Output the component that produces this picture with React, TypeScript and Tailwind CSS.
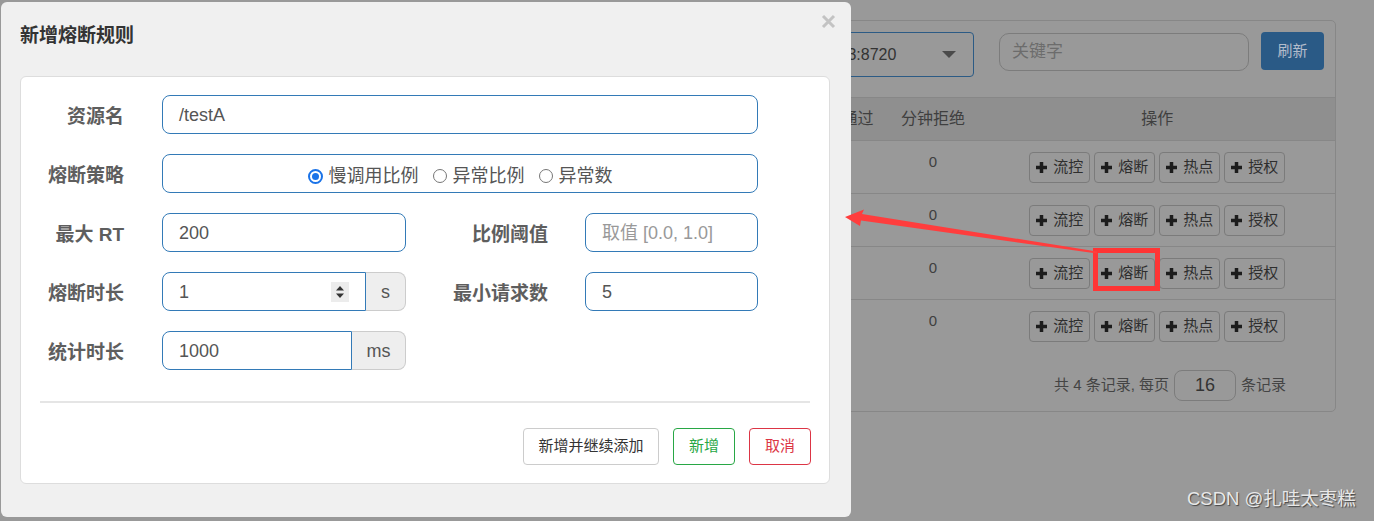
import React from 'react';

const ops = ['流控', '熔断', '热点', '授权'];

function PlusIcon() {
  return (
    <svg width="11" height="11" viewBox="0 0 11 11" className="shrink-0">
      <rect x="3.75" y="0" width="3.5" height="11" fill="#1c1c1c" />
      <rect x="0" y="3.75" width="11" height="3.5" fill="#1c1c1c" />
    </svg>
  );
}

function TableRow() {
  return (
    <div className="flex h-[53px] border-t border-[#878787]">
      <div className="w-[334px]" />
      <div className="w-[77px] pt-[11px] text-center text-[15px] leading-[20px] text-[#3f3f3f]">0</div>
      <div className="ml-[8px] flex w-[356px] justify-center gap-[4px] pt-[11px]">
        {ops.map((op) => (
          <div
            key={op}
            className="flex h-[31px] w-[61px] items-center justify-center gap-[6px] rounded-[4px] border border-[#7b7b7b] text-[15px] text-[#2e2e2e]"
          >
            <PlusIcon />
            <span>{op}</span>
          </div>
        ))}
      </div>
    </div>
  );
}

function Label({ text, width }: { text: string; width: string }) {
  return (
    <div className={`${width} shrink-0 pt-[5px] text-right text-[19px] font-bold text-[#5e5e5e]`}>{text}</div>
  );
}

function Radio({ checked, label }: { checked?: boolean; label: string }) {
  return (
    <div className="flex items-center gap-[6px]">
      {checked ? (
        <span className="flex h-[15px] w-[15px] items-center justify-center rounded-full border-[2px] border-[#1a73e8]">
          <span className="h-[7px] w-[7px] rounded-full bg-[#1a73e8]" />
        </span>
      ) : (
        <span className="h-[14px] w-[14px] rounded-full border border-[#767676] bg-white" />
      )}
      <span className="text-[18px] text-[#555]">{label}</span>
    </div>
  );
}

export default function App() {
  return (
    <div className="relative h-[521px] w-[1374px] overflow-hidden bg-[#999] font-['Liberation_Sans','Noto_Sans_CJK_SC',sans-serif]">
      {/* page behind the dialog */}
      <div className="ml-[560px] mt-[20px] h-[392px] w-[776px] rounded-[5px] border border-[#878787]">
        <div className="flex items-start pt-[11px]">
          <div className="ml-[180px] flex h-[45px] w-[233px] items-center justify-between rounded-[4px] border border-[#2c5b85] pl-[12px] pr-[17px]">
            <span className="text-[16px] text-[#333]">192.168.0.103:8720</span>
            <span className="h-0 w-0 border-x-[7px] border-t-[7px] border-x-transparent border-t-[#4a4a4a]" />
          </div>
          <div className="ml-[25px] mt-[1px] flex h-[38px] w-[250px] items-center rounded-[10px] border border-[#7c7c7c] pl-[12px] text-[17px] text-[#6c6c6c]">
            关键字
          </div>
          <div className="ml-[12px] flex h-[38px] w-[63px] items-center justify-center rounded-[4px] bg-[#2a5a86] text-[15px] text-[#b3bccb]">
            刷新
          </div>
        </div>
        <div className="mt-[20px] flex h-[43px] items-center border-t border-[#878787] bg-[#8f8f8f] text-[16px] text-[#3f3f3f]">
          <div className="w-[334px] pr-[21px] text-right">最近通过</div>
          <div className="w-[77px] text-center">分钟拒绝</div>
          <div className="ml-[8px] w-[356px] text-center">操作</div>
        </div>
        <TableRow />
        <TableRow />
        <TableRow />
        <TableRow />
        <div className="mt-[18px] flex items-center justify-end gap-[5px] pr-[49px] text-[15px] text-[#444]">
          <span>共 4 条记录, 每页</span>
          <span className="flex h-[31px] w-[62px] items-center justify-center rounded-[8px] border border-[#7c7c7c] text-[18px] text-[#333]">
            16
          </span>
          <span>条记录</span>
        </div>
      </div>

      {/* dialog */}
      <div className="absolute left-[1px] top-[2px] h-[515px] w-[850px] rounded-[6px] bg-[#f0f0f0]">
        <svg className="absolute left-[820px] top-[12px]" width="15" height="15" viewBox="0 0 15 15">
          <path d="M2 2 L13 13 M13 2 L2 13" stroke="#c3c3c3" strokeWidth="3" />
        </svg>
        <div className="pl-[19px] pt-[22px] text-[19px] font-bold leading-[24px] text-[#333]">新增熔断规则</div>
        <div className="ml-[19px] mt-[28px] h-[408px] w-[810px] rounded-[6px] border border-[#dddddd] bg-white">
          <div className="flex flex-col gap-[20px] pt-[18px]">
            <div className="flex h-[39px] items-center">
              <Label text="资源名" width="w-[103px]" />
              <div className="ml-[38px] flex h-[39px] w-[596px] items-center rounded-[8px] border border-[#337ab7] pl-[16px] pt-[2px] text-[18px] text-[#555]">
                /testA
              </div>
            </div>
            <div className="flex h-[39px] items-center">
              <Label text="熔断策略" width="w-[103px]" />
              <div className="ml-[38px] flex h-[39px] w-[596px] items-center justify-center gap-[14px] rounded-[8px] border border-[#337ab7] pt-[5px]">
                <Radio checked label="慢调用比例" />
                <Radio label="异常比例" />
                <Radio label="异常数" />
              </div>
            </div>
            <div className="flex h-[39px] items-center">
              <Label text="最大 RT" width="w-[103px]" />
              <div className="ml-[38px] flex h-[39px] w-[244px] items-center rounded-[8px] border border-[#337ab7] pl-[16px] pt-[2px] text-[18px] text-[#555]">
                200
              </div>
              <Label text="比例阈值" width="w-[142px]" />
              <div className="ml-[37px] flex h-[39px] w-[173px] items-center rounded-[8px] border border-[#337ab7] pl-[16px] pt-[2px] text-[18px] text-[#999]">
                取值 [0.0, 1.0]
              </div>
            </div>
            <div className="flex h-[39px] items-center">
              <Label text="熔断时长" width="w-[103px]" />
              <div className="ml-[38px] flex h-[39px] w-[244px]">
                <div className="flex w-[204px] items-center justify-between rounded-l-[8px] border border-[#337ab7] pl-[16px] pr-[16px] text-[18px] text-[#555]">
                  <span className="pt-[2px]">1</span>
                  <span className="flex h-[20px] w-[18px] items-center justify-center bg-[#ececec]">
                    <svg width="10" height="14" viewBox="0 0 10 14">
                      <path d="M5 1 L9 5.5 L1 5.5 Z" fill="#333" />
                      <path d="M5 13 L9 8.5 L1 8.5 Z" fill="#333" />
                    </svg>
                  </span>
                </div>
                <div className="flex w-[40px] items-center justify-center rounded-r-[8px] border border-l-0 border-[#cccccc] bg-[#eeeeee] pt-[2px] text-[18px] text-[#555]">
                  s
                </div>
              </div>
              <Label text="最小请求数" width="w-[142px]" />
              <div className="ml-[37px] flex h-[39px] w-[173px] items-center rounded-[8px] border border-[#337ab7] pl-[16px] pt-[2px] text-[18px] text-[#555]">
                5
              </div>
            </div>
            <div className="flex h-[39px] items-center">
              <Label text="统计时长" width="w-[103px]" />
              <div className="ml-[38px] flex h-[39px] w-[244px]">
                <div className="flex w-[190px] items-center rounded-l-[8px] border border-[#337ab7] pl-[16px] pt-[2px] text-[18px] text-[#555]">
                  1000
                </div>
                <div className="flex w-[54px] items-center justify-center rounded-r-[8px] border border-l-0 border-[#cccccc] bg-[#eeeeee] pt-[2px] text-[18px] text-[#555]">
                  ms
                </div>
              </div>
            </div>
          </div>
          <div className="mx-[19px] mt-[31px] h-[2px] bg-[#e5e5e5]" />
          <div className="mr-[18px] mt-[25px] flex justify-end gap-[14px] text-[15px]">
            <div className="flex h-[37px] w-[136px] items-center justify-center rounded-[4px] border border-[#cccccc] text-[#333]">
              新增并继续添加
            </div>
            <div className="flex h-[37px] w-[62px] items-center justify-center rounded-[4px] border border-[#28a745] text-[#28a745]">
              新增
            </div>
            <div className="flex h-[37px] w-[62px] items-center justify-center rounded-[4px] border border-[#dc3545] text-[#dc3545]">
              取消
            </div>
          </div>
        </div>
      </div>

      {/* annotation */}
      <div className="absolute left-[1093px] top-[248px] h-[43px] w-[67px] border-[5px] border-[#ff3535]" />
      <svg className="pointer-events-none absolute left-0 top-0" width="1374" height="521" viewBox="0 0 1374 521">
        <polygon
          points="845,217 864,209.5 862,214 1097,251.5 1097,253.5 861,220.5 860,226"
          fill="#ff3d3d"
        />
      </svg>

      <div className="absolute left-[1187px] top-[488px] text-[18.5px] leading-[22px] text-[#e8e8e8] [text-shadow:1px_1px_1px_rgba(0,0,0,0.55)]">
        CSDN @扎哇太枣糕
      </div>
    </div>
  );
}
